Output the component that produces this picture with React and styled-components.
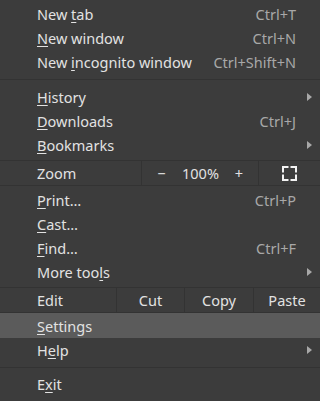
import React from "react";
import styled, { createGlobalStyle } from "styled-components";

const Global = createGlobalStyle`
  html, body { margin: 0; padding: 0; background: #3c3c3c; }
  body { width: 320px; height: 401px; overflow: hidden; }
`;

const Menu = styled.div`
  width: 320px;
  height: 401px;
  box-sizing: border-box;
  padding-top: 2px;
  background: #3c3c3c;
  font-family: "Noto Sans", "DejaVu Sans", sans-serif;
  font-size: 14.5px;
  color: #e2e2e2;
  display: flex;
  flex-direction: column;
`;

const Item = styled.div`
  height: ${(p) => p.$h || 24}px;
  flex: none;
  display: flex;
  align-items: center;
  padding: 0 24px 0 37px;
  position: relative;
  background: ${(p) => (p.$active ? "#5b5b5b" : "transparent")};
`;

const Label = styled.span`
  flex: 1;
  white-space: nowrap;
`;

const Key = styled.span`
  color: #a8a8a8;
  white-space: nowrap;
`;

const U = styled.span`
  text-decoration: underline;
  text-underline-offset: 2px;
  text-decoration-thickness: 1px;
`;

const Arrow = styled.span`
  position: absolute;
  right: 8px;
  top: 50%;
  margin-top: -4px;
  width: 0;
  height: 0;
  border-top: 4px solid transparent;
  border-bottom: 4px solid transparent;
  border-left: 5px solid #a8a8a8;
`;

const Separator = styled.div`
  flex: none;
  height: 1px;
  background: #333333;
  margin: ${(p) => p.$above}px 0 ${(p) => p.$below}px;
`;

const SplitRow = styled.div`
  flex: none;
  height: 24px;
  display: flex;
  align-items: stretch;
  border-top: 1px solid #333333;
  border-bottom: 1px solid #333333;
  margin: ${(p) => p.$above}px 0 ${(p) => p.$below}px;
`;

const SplitLabel = styled.div`
  width: ${(p) => p.$w}px;
  flex: none;
  box-sizing: border-box;
  padding-left: 37px;
  display: flex;
  align-items: center;
  border-right: 1px solid #333333;
`;

const Cell = styled.div`
  flex: ${(p) => (p.$w ? "none" : "1")};
  width: ${(p) => (p.$w ? `${p.$w}px` : "auto")};
  display: flex;
  align-items: center;
  justify-content: center;
  box-sizing: border-box;
  border-right: ${(p) => (p.$divider ? "1px solid #333333" : "none")};
  color: ${(p) => p.$color || "#e2e2e2"};
`;

const FullscreenIcon = () => (
  <svg width="15" height="15" viewBox="0 0 15 15" fill="none" stroke="#f2f2f2" strokeWidth="2">
    <path d="M1 5.5V1h4.5M9.5 1H14v4.5M14 9.5V14H9.5M5.5 14H1V9.5" strokeLinecap="square" />
  </svg>
);

export default function App() {
  return (
    <>
      <Global />
      <Menu>
        <Item>
          <Label>New <U>t</U>ab</Label>
          <Key>Ctrl+T</Key>
        </Item>
        <Item>
          <Label><U>N</U>ew window</Label>
          <Key>Ctrl+N</Key>
        </Item>
        <Item>
          <Label>New <U>i</U>ncognito window</Label>
          <Key>Ctrl+Shift+N</Key>
        </Item>
        <Separator $above={5} $below={5} />
        <Item>
          <Label><U>H</U>istory</Label>
          <Arrow />
        </Item>
        <Item>
          <Label><U>D</U>ownloads</Label>
          <Key>Ctrl+J</Key>
        </Item>
        <Item>
          <Label><U>B</U>ookmarks</Label>
          <Arrow />
        </Item>
        <SplitRow $above={3} $below={2}>
          <SplitLabel $w={142}>Zoom</SplitLabel>
          <Cell $w={39}>−</Cell>
          <Cell $w={39}>100%</Cell>
          <Cell $w={39} $divider>+</Cell>
          <Cell><FullscreenIcon /></Cell>
        </SplitRow>
        <Item>
          <Label><U>P</U>rint…</Label>
          <Key>Ctrl+P</Key>
        </Item>
        <Item>
          <Label><U>C</U>ast…</Label>
        </Item>
        <Item>
          <Label><U>F</U>ind…</Label>
          <Key>Ctrl+F</Key>
        </Item>
        <Item>
          <Label>More too<U>l</U>s</Label>
          <Arrow />
        </Item>
        <SplitRow $above={3} $below={0}>
          <SplitLabel $w={117}>Edit</SplitLabel>
          <Cell $w={68} $divider>Cut</Cell>
          <Cell $w={69} $divider>Copy</Cell>
          <Cell>Paste</Cell>
        </SplitRow>
        <Item $h={25} $active>
          <Label><U>S</U>ettings</Label>
        </Item>
        <Item>
          <Label>H<U>e</U>lp</Label>
          <Arrow />
        </Item>
        <Separator $above={5} $below={4} />
        <Item>
          <Label>E<U>x</U>it</Label>
        </Item>
      </Menu>
    </>
  );
}
